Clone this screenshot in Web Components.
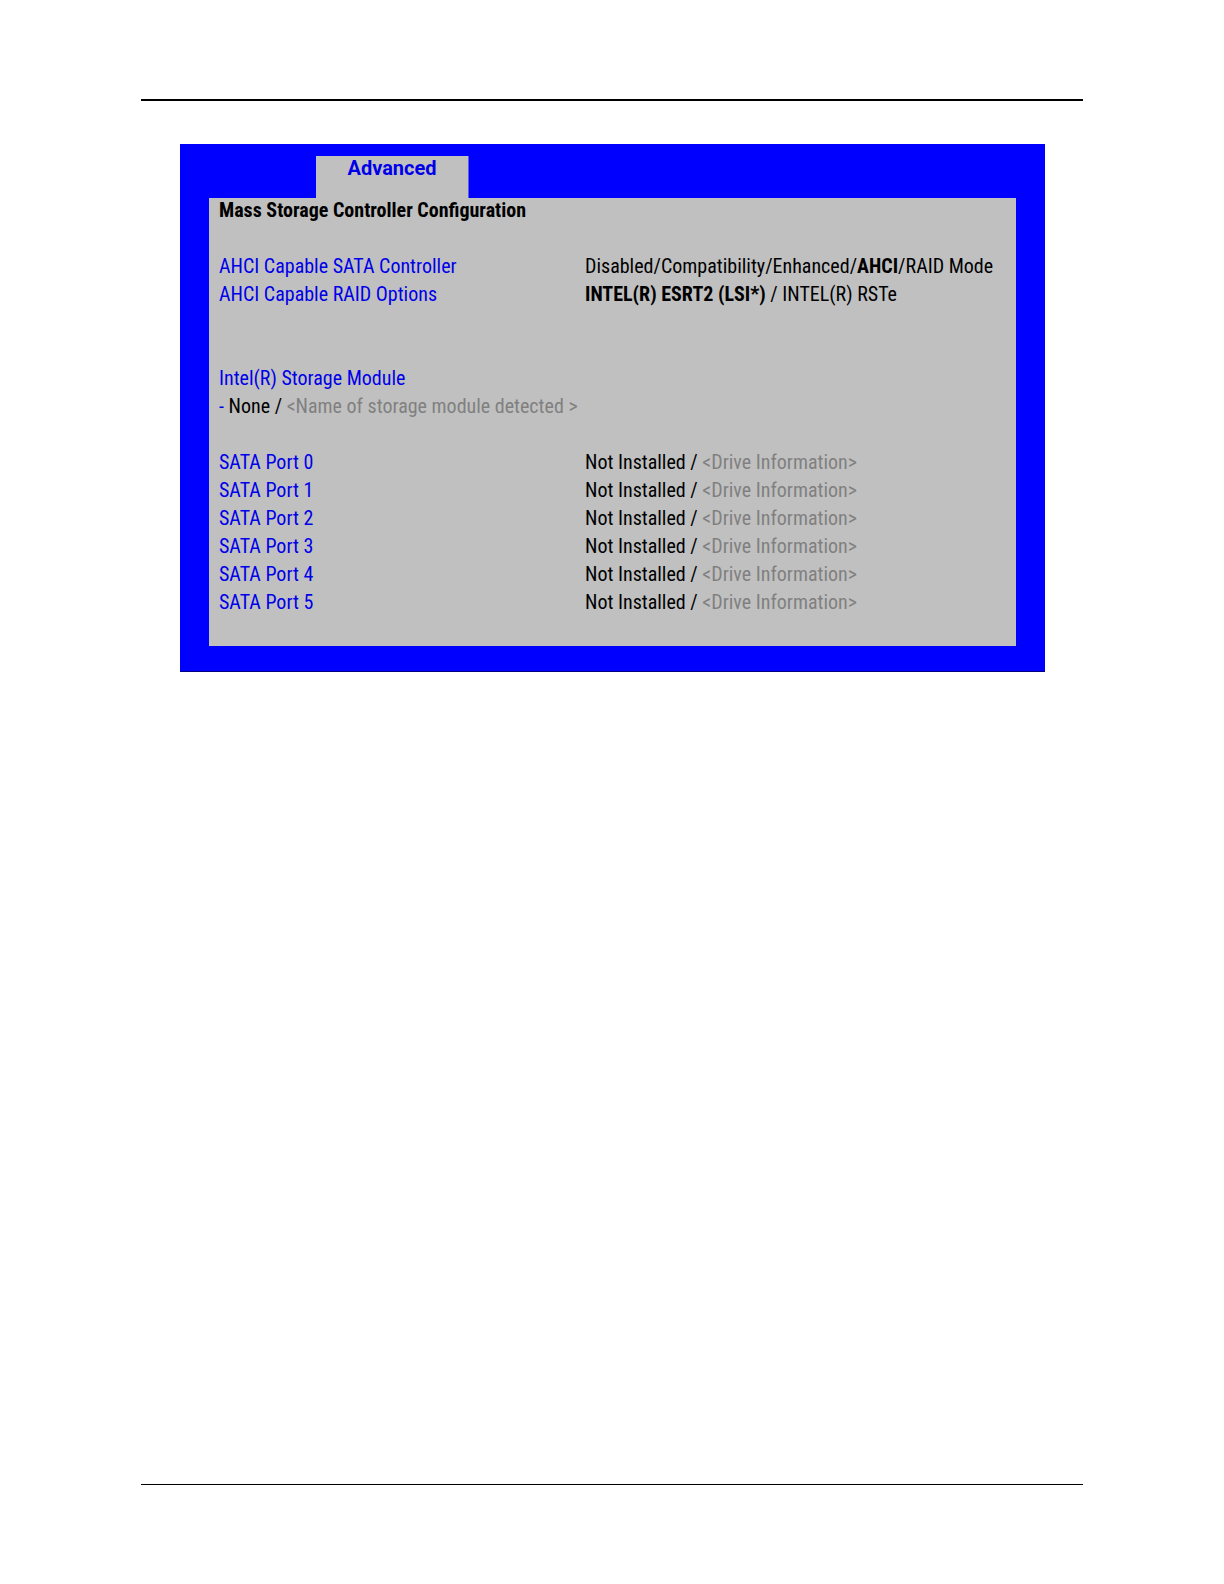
<!DOCTYPE html>
<html lang="en">
<head>
<meta charset="utf-8">
<title>Mass Storage Controller Configuration</title>
<style>
  body { margin: 0; background: #fff; }
</style>
</head>
<body>
<manual-page>
  <setup-screen>
    <setup-tab slot="tabs">Advanced</setup-tab>
    <setup-row><strong>Mass Storage Controller Configuration</strong></setup-row>
    <setup-row></setup-row>
    <setup-row option>AHCI Capable SATA Controller<span slot="value">Disabled/Compatibility/Enhanced/<b>AHCI</b>/RAID Mode</span></setup-row>
    <setup-row option>AHCI Capable RAID Options<span slot="value"><b>INTEL(R) ESRT2 (LSI*)</b> / INTEL(R) RSTe</span></setup-row>
    <setup-row></setup-row>
    <setup-row></setup-row>
    <setup-row option>Intel(R) Storage Module</setup-row>
    <setup-row option wide>- <setup-state name="None" detail="&lt;Name of storage module detected &gt;"></setup-state></setup-row>
    <setup-row></setup-row>
    <sata-port number="0"></sata-port>
    <sata-port number="1"></sata-port>
    <sata-port number="2"></sata-port>
    <sata-port number="3"></sata-port>
    <sata-port number="4"></sata-port>
    <sata-port number="5"></sata-port>
  </setup-screen>
</manual-page>
<script>
  class BaseElement extends HTMLElement {
    render(html) {
      if (!this.shadowRoot) this.attachShadow({ mode: 'open' });
      this.shadowRoot.innerHTML = html;
    }
  }

  // A printed page: header rule, content, footer rule.
  customElements.define('manual-page', class extends BaseElement {
    connectedCallback() {
      this.render(`
        <style>
          :host { display: flex; flex-direction: column; box-sizing: border-box; min-height: 100vh; padding: 99px 141px; }
          header { border-top: 2px solid #000; }
          main { margin: 43px 38px 43px 39px; }
          footer { margin-top: auto; border-top: 1px solid #000; }
        </style>
        <header></header><main><slot></slot></main><footer></footer>`);
    }
  });

  // The firmware screen: blue frame, tab strip, grey body.
  customElements.define('setup-screen', class extends BaseElement {
    connectedCallback() {
      this.render(`
        <style>
          :host { display: block; background: #0000ff; border-bottom: 1px solid #000080; padding: 12px 29px 25px; color: #000; font: 20px/24px "Roboto Condensed", Roboto, sans-serif; }
          nav { display: flex; padding-left: 107px; }
          section { background: #c0c0c0; padding: 0 10px 28px; }
        </style>
        <nav role="tablist"><slot name="tabs"></slot></nav>
        <section><slot></slot></section>`);
    }
  });

  customElements.define('setup-tab', class extends BaseElement {
    connectedCallback() {
      this.render(`
        <style>
          :host { display: block; }
          button { display: block; width: 153px; padding: 0 0 18px; border: 0; border-right: 1px solid #5c5ce0; background: #c0c0c0; color: #0000e8; font: 700 20px/24px Roboto, sans-serif; text-align: center; }
        </style>
        <button type="button" role="tab" aria-selected="true"><slot></slot></button>`);
    }
  });

  customElements.define('setup-row', class extends BaseElement {
    connectedCallback() {
      this.render(`
        <style>
          :host { display: grid; grid-template-columns: 366fr 421fr; min-height: 28px; white-space: nowrap; }
          :host([option]) .label { color: #0000e8; }
          :host([wide]) .label { grid-column: 1 / -1; }
          .label, .value { min-width: 0; }
        </style>
        <div class="label"><slot></slot></div><div class="value"><slot name="value"></slot></div>`);
    }
  });

  customElements.define('setup-state', class extends BaseElement {
    connectedCallback() {
      this.render(`
        <style>
          :host { display: inline; color: #000; }
          span { color: #808080; }
        </style>${this.getAttribute('name')} / <span></span>`);
      this.shadowRoot.querySelector('span').textContent = this.getAttribute('detail');
    }
  });

  customElements.define('sata-port', class extends BaseElement {
    connectedCallback() {
      this.render(`
        <style>:host { display: block; }</style>
        <setup-row option>SATA Port ${this.getAttribute('number')}<setup-state slot="value" name="Not Installed" detail="&lt;Drive Information&gt;"></setup-state></setup-row>`);
    }
  });
</script>
</body>
</html>
